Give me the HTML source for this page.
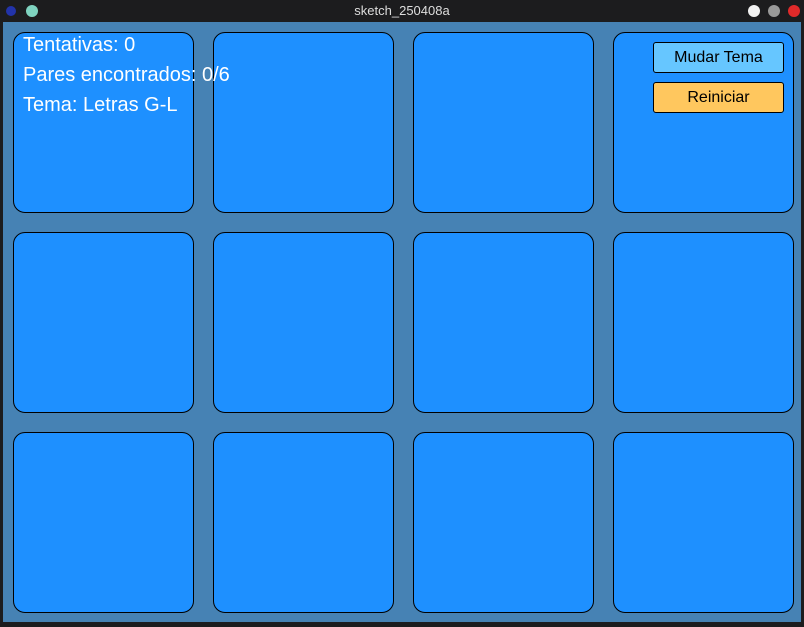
<!DOCTYPE html>
<html><head><style>
body{margin:0;width:804px;height:627px;background:#1c1c1e;position:relative;overflow:hidden;font-family:"Liberation Sans",sans-serif}
.tb{position:absolute;left:0;top:0;width:804px;height:22px;background:#1c1c1e;color:#ddd;font-size:13px;text-align:center;line-height:21px}
.dot{position:absolute;top:5px;width:12px;height:12px;border-radius:50%}
.cv{position:absolute;left:3px;top:22px;width:798px;height:600px;background:#4682b4}
.c{position:absolute;width:179px;height:179px;background:#1e90ff;border:1px solid #000;border-radius:12px}
.t{position:absolute;left:23px;color:#fff;font-size:20px;line-height:20px}
.b{position:absolute;left:653px;width:129px;height:29px;border:1px solid #000;border-radius:3px;text-align:center;line-height:29px;font-size:16px;color:#000}
</style></head><body>
<div class="tb">sketch_250408a</div>
<div class="dot" style="left:6px;top:6px;width:10px;height:10px;background:#2233aa"></div>
<div class="dot" style="left:26px;background:#7fd3c0"></div>
<div class="dot" style="left:748px;background:#f2f2f2"></div>
<div class="dot" style="left:768px;background:#999"></div>
<div class="dot" style="left:788px;background:#e02a2a"></div>
<div class="cv"></div>
<div class="c" style="left:13px;top:32px"></div><div class="c" style="left:213px;top:32px"></div><div class="c" style="left:413px;top:32px"></div><div class="c" style="left:613px;top:32px"></div>
<div class="c" style="left:13px;top:232px"></div><div class="c" style="left:213px;top:232px"></div><div class="c" style="left:413px;top:232px"></div><div class="c" style="left:613px;top:232px"></div>
<div class="c" style="left:13px;top:432px"></div><div class="c" style="left:213px;top:432px"></div><div class="c" style="left:413px;top:432px"></div><div class="c" style="left:613px;top:432px"></div>
<div class="t" style="top:35px">Tentativas: 0</div>
<div class="t" style="top:65px">Pares encontrados: 0/6</div>
<div class="t" style="top:95px">Tema: Letras G-L</div>
<div class="b" style="top:42px;background:#66c6ff">Mudar Tema</div>
<div class="b" style="top:82px;background:#ffc75e">Reiniciar</div>
</body></html>
